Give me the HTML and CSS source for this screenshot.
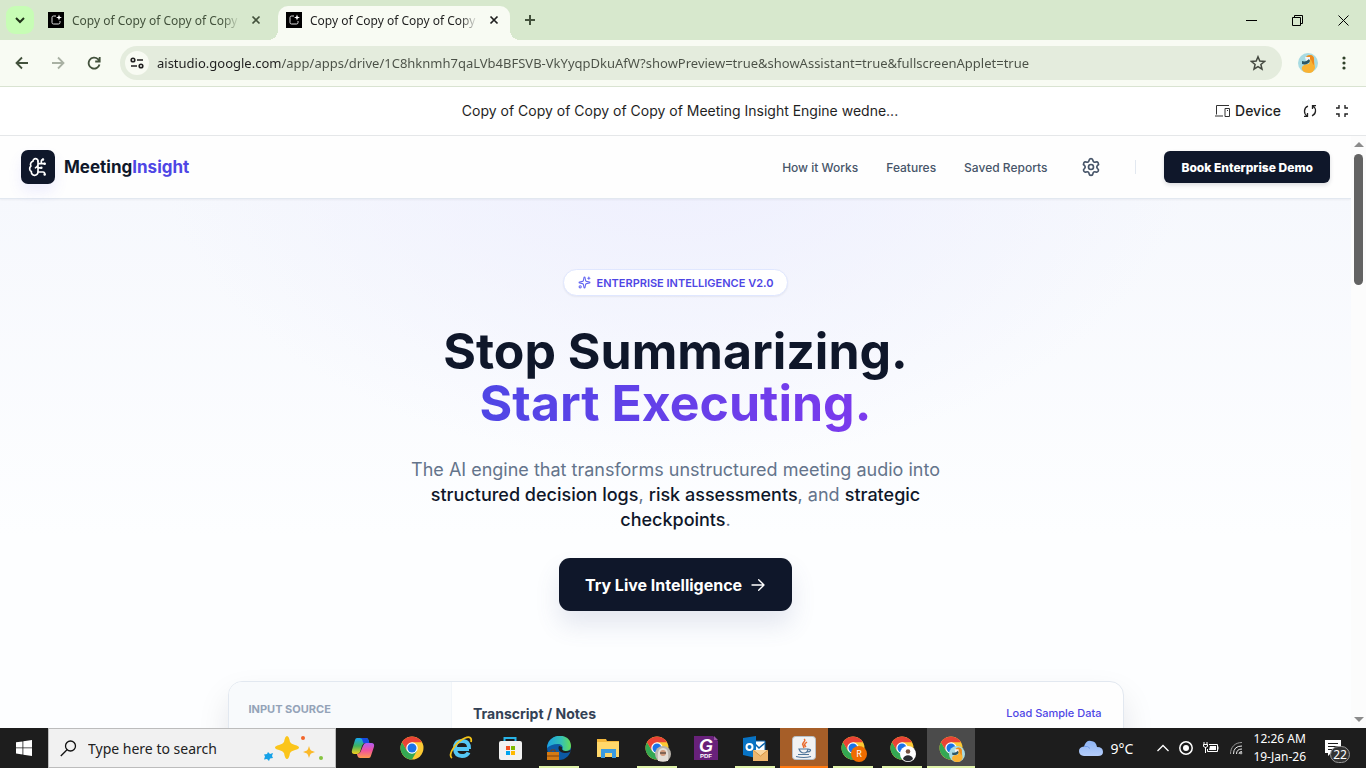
FILE: index.html
```html
<!DOCTYPE html>
<html lang="en">
<head>
  <meta charset="UTF-8">
  <meta name="viewport" content="width=device-width, initial-scale=1.0">
  <title>Meeting Insight Engine</title>
  <link rel="stylesheet" href="styles.css">
</head>
<body>
  <!-- shared symbols -->
  <svg class="defs" aria-hidden="true">
    <symbol id="favicon" viewBox="0 0 16 16">
      <rect width="16" height="16" fill="#000"/>
      <path d="M8 4H5.500A1.500 1.500 0 0 0 4 5.500v5A1.500 1.500 0 0 0 5.500 12h5a1.500 1.500 0 0 0 1.500-1.500V9" fill="none" stroke="#ddd"/>
      <path d="M11 2.500l.8 2.200 2.200.8-2.200.8-.8 2.200-.8-2.200-2.200-.8 2.200-.8z" fill="#fff"/>
    </symbol>
    <symbol id="close" viewBox="0 0 10 10">
      <path d="M1.500 1.500l7 7m0-7l-7 7" fill="none" stroke="currentColor" stroke-width="1.700"/>
    </symbol>
    <symbol id="chrome" viewBox="0 0 48 48">
      <circle cx="24" cy="24" r="23" fill="#fcc934"/>
      <path d="M4.100 12.500A23 23 0 0 0 24 47l10-17.300L24 24l-10 5.700z" fill="#34a853"/>
      <path d="M4.100 12.500A23 23 0 0 1 43.900 12.500H24L14 29.700z" fill="#ea4335"/>
      <circle cx="24" cy="24" r="11.500" fill="#fff"/>
      <circle cx="24" cy="24" r="9" fill="#1a73e8"/>
    </symbol>
    <symbol id="duck" viewBox="0 0 20 20">
      <circle cx="10" cy="10" r="10" fill="#a8dbe2"/>
      <path d="M8 5c1-4 8-4 8 1 0 4 1 6 1 9-1 3-3 5-6 5-5 0-8-3-7-6 1-2 4-3 7-3 1-2 1-4-3-6z" fill="#f9b233"/>
      <path d="M8 4c2-3 8-3 8 2v6c-2-1-2-5-4-6z" fill="#ee8a1d"/>
      <path d="M7 4h5v3l-4 1z" fill="#f4f4f4"/>
      <path d="M4 8c3 1 5 0 7-2l1 2c-1 3-5 4-8 3z" fill="#2d5968"/>
    </symbol>
  </svg>

  <header class="tab-strip">
    <button class="tab-search" aria-label="Search tabs">
      <svg width="12" height="12" viewBox="0 0 12 12" fill="none" stroke="#1f3318" stroke-width="2"><path d="M2 4l4 4 4-4"/></svg>
    </button>
    <div class="tab">
      <svg class="favicon"><use href="#favicon"/></svg>
      <span class="tab-title">Copy of Copy of Copy of Copy of</span>
      <button class="tab-close" aria-label="Close tab"><svg width="10" height="10"><use href="#close"/></svg></button>
    </div>
    <div class="tab tab-active">
      <svg class="favicon"><use href="#favicon"/></svg>
      <span class="tab-title">Copy of Copy of Copy of Copy of</span>
      <button class="tab-close" aria-label="Close tab"><svg width="10" height="10"><use href="#close"/></svg></button>
    </div>
    <button class="new-tab" aria-label="New tab">
      <svg width="12" height="12" viewBox="0 0 12 12" stroke="#43523c" stroke-width="2"><path d="M6 1v10M1 6h10"/></svg>
    </button>
    <div class="window-controls">
      <button aria-label="Minimize"><svg width="11" height="11" viewBox="0 0 11 11" stroke="#000"><path d="M0 5.500h11"/></svg></button>
      <button aria-label="Restore"><svg width="11" height="11" viewBox="0 0 11 11" fill="none" stroke="#000"><path d="M.5 2.500h8v8h-8zM2.500 2.500v-2h8v8h-2"/></svg></button>
      <button aria-label="Close"><svg width="11" height="11" viewBox="0 0 11 11" stroke="#000"><path d="M.5.5l10 10M10.500.5l-10 10"/></svg></button>
    </div>
  </header>

  <div class="toolbar">
    <button class="tool" aria-label="Back"><svg width="14" height="14" viewBox="0 0 14 14" fill="none" stroke="#43523c" stroke-width="1.800"><path d="M13 7H2M7 1.500L1.500 7 7 12.500"/></svg></button>
    <button class="tool" aria-label="Forward"><svg width="14" height="14" viewBox="0 0 14 14" fill="none" stroke="#a9b1a3" stroke-width="1.800"><path d="M1 7h11M7 1.500L12.500 7 7 12.500"/></svg></button>
    <button class="tool" aria-label="Reload"><svg width="14" height="14" viewBox="0 0 14 14" fill="none" stroke="#43523c" stroke-width="1.800"><path d="M12.500 8.500A5.500 5.500 0 1 1 11 3.200L12.500 5M12.700 1v4.500H8.200"/></svg></button>
    <div class="omnibox">
      <button class="site-info" aria-label="View site information"><svg width="14" height="12" viewBox="0 0 14 12" fill="none" stroke="#1f1f1f" stroke-width="1.600"><circle cx="3" cy="3" r="1.800"/><path d="M7 3h6M1 9h6"/><circle cx="11" cy="9" r="1.800"/></svg></button>
      <input class="url" type="text" aria-label="Address" value="aistudio.google.com/app/apps/drive/1C8hknmh7qaLVb4BFSVB-VkYyqpDkuAfW?showPreview=true&amp;showAssistant=true&amp;fullscreenApplet=true">
      <button class="star" aria-label="Bookmark"><svg width="16" height="16" viewBox="0 0 16 16" fill="none" stroke="#43483f" stroke-width="1.500"><path d="M8 1.800l1.800 4.300 4.700.4-3.600 3 1.100 4.600L8 11.600l-4 2.500 1.100-4.600-3.600-3 4.700-.4z"/></svg></button>
    </div>
    <button class="profile" aria-label="Profile"><svg width="20" height="20"><use href="#duck"/></svg></button>
    <button class="more" aria-label="Menu"><svg width="4" height="14" viewBox="0 0 4 14" fill="#2f4028"><circle cx="2" cy="2" r="1.600"/><circle cx="2" cy="7" r="1.600"/><circle cx="2" cy="12" r="1.600"/></svg></button>
  </div>

  <div class="app-bar">
    <span class="app-title">Copy of Copy of Copy of Copy of Meeting Insight Engine wedne...</span>
    <div class="app-actions">
      <button class="device"><svg width="15" height="12" viewBox="0 0 15 12" fill="none" stroke="#333"><path d="M14 .5H1.500v9M0 11h8M10 3.500h4.500v8H10zM12 5.500h1"/></svg>Device</button>
      <button aria-label="Reload app"><svg width="14" height="14" viewBox="0 0 14 14" fill="none" stroke="#222" stroke-width="1.300"><path d="M5 2.200C.5 4 .5 9.500 4 12M1 12.300h3.500V9M9 11.800c4.500-1.800 4.500-7.300 1-9.800M13 1.700H9.500V5"/></svg></button>
      <button aria-label="Exit full screen"><svg width="14" height="14" viewBox="0 0 14 14" fill="none" stroke="#222" stroke-width="1.400"><path d="M1 4h3V1M10 1v3h3M13 10h-3v3M4 13v-3H1"/></svg></button>
    </div>
  </div>

  <div class="frame">
    <div class="preview">
      <nav class="nav">
        <a class="brand" href="#">
          <span class="brand-mark">
            <svg width="20" height="20" viewBox="0 0 24 24" fill="none" stroke="#fff" stroke-width="2" stroke-linecap="round" stroke-linejoin="round">
              <path d="M12 5a3 3 0 1 0-5.997.125 4 4 0 0 0-2.526 5.770 4 4 0 0 0 .556 6.588A4 4 0 1 0 12 18"/>
              <path d="M9 13a4.500 4.500 0 0 0 3-4M12 13h4M12 18h6a2 2 0 0 1 2 2v1M12 8h8M16 8V5a2 2 0 0 1 2-2M12 5v13"/>
              <circle cx="16" cy="13" r=".5"/><circle cx="18" cy="3" r=".5"/><circle cx="20" cy="21" r=".5"/><circle cx="20" cy="8" r=".5"/>
            </svg>
          </span>
          <span>Meeting<span class="brand-accent">Insight</span></span>
        </a>
        <div class="nav-links">
          <a href="#how">How it Works</a>
          <a href="#features">Features</a>
          <a href="#reports">Saved Reports</a>
          <button class="settings" aria-label="Settings">
            <svg width="20" height="20" viewBox="0 0 24 24" fill="none" stroke="#475569" stroke-width="2" stroke-linecap="round" stroke-linejoin="round">
              <path d="M9.671 4.136a2.340 2.340 0 0 1 4.659 0 2.340 2.340 0 0 0 3.319 1.915 2.340 2.340 0 0 1 2.330 4.033 2.340 2.340 0 0 0 0 3.831 2.340 2.340 0 0 1-2.330 4.033 2.340 2.340 0 0 0-3.319 1.915 2.340 2.340 0 0 1-4.659 0 2.340 2.340 0 0 0-3.320-1.915 2.340 2.340 0 0 1-2.330-4.033 2.340 2.340 0 0 0 0-3.831A2.340 2.340 0 0 1 6.350 6.051a2.340 2.340 0 0 0 3.319-1.915"/>
              <circle cx="12" cy="12" r="3"/>
            </svg>
          </button>
          <span class="divider"></span>
          <button class="demo">Book Enterprise Demo</button>
        </div>
      </nav>

      <main class="hero">
        <div class="badge">
          <svg width="13" height="13" viewBox="0 0 24 24" fill="none" stroke="#6366f1" stroke-width="2" stroke-linecap="round" stroke-linejoin="round">
            <path d="M11.017 2.814a1 1 0 0 1 1.966 0l1.051 5.558a2 2 0 0 0 1.594 1.594l5.558 1.051a1 1 0 0 1 0 1.966l-5.558 1.051a2 2 0 0 0-1.594 1.594l-1.051 5.558a1 1 0 0 1-1.966 0l-1.051-5.558a2 2 0 0 0-1.594-1.594l-5.558-1.051a1 1 0 0 1 0-1.966l5.558-1.051a2 2 0 0 0 1.594-1.594zM20 2v4M22 4h-4"/>
            <circle cx="4" cy="20" r="2"/>
          </svg>
          ENTERPRISE INTELLIGENCE V2.0
        </div>
        <h1>Stop Summarizing.<br><span class="gradient-text">Start Executing.</span></h1>
        <p class="lead">The AI engine that transforms unstructured meeting audio into <strong>structured decision logs</strong>, <strong>risk assessments</strong>, and <strong>strategic checkpoints</strong>.</p>
        <button class="cta">Try Live Intelligence
          <svg width="16" height="16" viewBox="0 0 24 24" fill="none" stroke="#fff" stroke-width="2" stroke-linecap="round" stroke-linejoin="round"><path d="M3 12h18M13 4l8 8-8 8"/></svg>
        </button>

        <section class="workspace">
          <aside class="sources"><h2>INPUT SOURCE</h2></aside>
          <div class="editor">
            <h3>Transcript / Notes</h3>
            <button class="sample">Load Sample Data</button>
          </div>
        </section>
      </main>
    </div>
    <div class="scrollbar">
      <span class="arrow-up"></span>
      <span class="thumb"></span>
      <span class="arrow-down"></span>
    </div>
  </div>

  <footer class="taskbar">
    <button class="start" aria-label="Start">
      <svg width="16" height="16" viewBox="0 0 16 16" fill="#fff"><path d="M0 2.300L6.500 1.400v6.100H0zM7.300 1.300L16 0v7.500H7.300zM0 8.300h6.500v6.200L0 13.600zM7.300 8.300H16V16l-8.700-1.300z"/></svg>
    </button>
    <label class="search">
      <svg width="17" height="17" viewBox="0 0 17 17" fill="none" stroke="#111" stroke-width="1.300"><circle cx="10.500" cy="6" r="5"/><path d="M7 9.700L.8 16"/></svg>
      <input type="text" placeholder="Type here to search" aria-label="Search">
      <svg width="64" height="28" viewBox="0 0 64 28">
        <path d="M24 2q2 0 3 6 1 2 5 3 4 1 4 2.500t-4 2.500q-4 1-5 3-1 6-3 6t-3-6q-1-2-5-3-4-1-4-2.500t4-2.500q4-1 5-3 1-6 3-6z" fill="#fbc51b"/>
        <path d="M46 12q1 4 2 4.500l4 1.500-4 1.500q-1 .5-2 4.500-1-4-2-4.500L40 18l4-1.500q1-.5 2-4.500z" fill="#fbb929"/>
        <path d="M5 18l2 2 3-1-1 3 1 2-3 .5-1 2.500-2-2-3 .5 1-3-1-2 3-.5z" fill="#15a1e8"/>
        <circle cx="40" cy="4" r="2" fill="#f2652a"/><circle cx="58" cy="24" r="2" fill="#86c440"/>
      </svg>
    </label>

    <div class="apps">
      <button class="app" aria-label="Copilot">
        <svg width="24" height="24" viewBox="0 0 24 24">
          <defs>
            <linearGradient id="cp1" x2="0" y2="1"><stop offset="0" stop-color="#15a8f4"/><stop offset=".5" stop-color="#3fb35e"/><stop offset="1" stop-color="#f5cf1c"/></linearGradient>
            <linearGradient id="cp2" x2="0" y2="1"><stop offset="0" stop-color="#b05cf5"/><stop offset=".5" stop-color="#f1539c"/><stop offset="1" stop-color="#ff9a4d"/></linearGradient>
          </defs>
          <path d="M6 2h9q2 0 2.500 2l.8 3H14q-2 0-3 3l-2 6q-.6 2-3 2H3.500Q0 18 1 14L4 4q.5-2 2-2z" fill="url(#cp1)"/>
          <path d="M9 2h6q2 0 2.500 2l.8 3h-6L11 3z" fill="#174ae4"/>
          <path d="M18 22H9q-2 0-2.500-2l-.6-2q3 0 4-3l2-5q1-3 3-3h5.500q3.500 0 2.500 4l-3 9q-.5 2-1.900 2z" fill="url(#cp2)"/>
        </svg>
      </button>
      <button class="app" aria-label="Chrome"><svg width="24" height="24"><use href="#chrome"/></svg></button>
      <button class="app" aria-label="Internet Explorer">
        <svg width="24" height="24" viewBox="0 0 24 24" fill="none">
          <path d="M20 13H7M20 13q.5-8-7-8T6 13q.5 7 7 7 5 0 6.500-3.500" stroke="#54c8f5" stroke-width="4"/>
          <path d="M3 22c-5-3 4-16 13-20 5-2 7 0 6 4" stroke="#f5c518" stroke-width="1.800"/>
        </svg>
      </button>
      <button class="app" aria-label="Microsoft Store">
        <svg width="24" height="24" viewBox="0 0 24 24"><path d="M6.500 7V2h11v5" fill="none" stroke="#28b4e8" stroke-width="2"/><rect x="1" y="5" width="23" height="19" rx="2" fill="#f2f2f2"/><path d="M8 10h4v4H8z" fill="#f25022"/><path d="M13 10h4v4h-4z" fill="#7fba00"/><path d="M8 15h4v4H8z" fill="#00a4ef"/><path d="M13 15h4v4h-4z" fill="#ffb900"/></svg>
      </button>
      <button class="app app-open" aria-label="Edge">
        <svg width="24" height="24" viewBox="0 0 24 24">
          <defs><linearGradient id="edge"><stop offset="0" stop-color="#1ba1e2"/><stop offset=".6" stop-color="#35c1b4"/><stop offset="1" stop-color="#66dd55"/></linearGradient></defs>
          <circle cx="12" cy="12" r="12" fill="#0c59a4"/>
          <path d="M0 12C1-4 24-4 24 10c0 6-8 7-9 4 2-3 0-6-4-6C6 8 2 10 0 12z" fill="url(#edge)"/>
          <path d="M12 10c-2 4 2 9 11 6l1-2c-5 2-10 1-9-3z" fill="#1d1e20"/>
          <path d="M0 16h12v8H0z" fill="#d57a12"/><path d="M0 20h12M4 16v-2h4v2" fill="none" stroke="#81400c"/>
        </svg>
      </button>
      <button class="app" aria-label="File Explorer">
        <svg width="24" height="24" viewBox="0 0 24 24"><path d="M1 3h9l1 2h12v16H1z" fill="#f3b73b"/><path d="M1 6h22v15H1z" fill="#ffd76a"/><path d="M5 13h15v9h-4v-5H9v5H5z" fill="#3a9be0"/></svg>
      </button>
      <button class="app app-open" aria-label="Chrome, second profile">
        <svg width="24" height="24"><use href="#chrome"/></svg>
        <svg class="profile-dot" viewBox="0 0 16 16"><circle cx="8" cy="8" r="8" fill="#b9b4ac"/><path d="M3 15C2 5 4 2 8 2s6 3 5 13z" fill="#e4ded7"/><circle cx="8" cy="7" r="3" fill="#d1997a"/><path d="M5 7h6" stroke="#333"/></svg>
      </button>
      <button class="app" aria-label="PDF Editor">
        <svg width="24" height="24" viewBox="0 0 24 24"><path d="M0 0h19l5 5v19H0z" fill="#68217a"/><path d="M20 0l4 4h-4z" fill="#9a55a8"/><text class="pdf-g" x="5" y="16">G</text><text class="pdf-label" x="6" y="22">PDF</text></svg>
      </button>
      <button class="app app-open" aria-label="Outlook">
        <svg width="26" height="26" viewBox="0 0 26 26"><path d="M12 6h11v12H12z" fill="#fff" stroke="#0a64ad"/><path d="M13 9l4 4 6-5" fill="none" stroke="#0a64ad" stroke-width="1.500"/><path d="M1 3l13-2v22L1 20z" fill="#0873c4"/><circle cx="7.500" cy="12" r="3" fill="none" stroke="#fff" stroke-width="2"/><path d="M11 15h15v11H11z" fill="#efb66d"/><path d="M11 15l7.500 6 7.500-6" fill="#fbd69f" stroke="#d59543"/></svg>
      </button>
      <button class="app app-alert" aria-label="Java">
        <svg width="24" height="24" viewBox="0 0 24 24"><rect x=".5" y=".5" width="23" height="23" rx="3" fill="#f1f2f3" stroke="#b7c0c8"/><path d="M12 3c3 2-3 4-1 6l1 3M15 6c-3 2-3 3-1 5" fill="none" stroke="#ea6b2d" stroke-width="1.500"/><path d="M7 13h9q-.5 4-4 4t-5-4zM16 13c4 0 3 3-1 3M6 18.500h11M4 20.500q8 2 15 0" fill="none" stroke="#50769a" stroke-width="1.200"/></svg>
      </button>
      <button class="app app-open" aria-label="Chrome, profile R">
        <svg width="24" height="24"><use href="#chrome"/></svg>
        <span class="profile-dot profile-letter">R</span>
      </button>
      <button class="app app-open" aria-label="Chrome, third profile">
        <svg width="24" height="24"><use href="#chrome"/></svg>
        <svg class="profile-dot" viewBox="0 0 16 16"><circle cx="8" cy="8" r="8" fill="#fff"/><circle cx="8" cy="5.500" r="2.300" fill="#765341"/><path d="M3 13c1-5 9-5 10 0-3 3-7 3-10 0z" fill="#292b30"/></svg>
      </button>
      <button class="app app-open app-current" aria-label="Chrome, current">
        <svg width="24" height="24"><use href="#chrome"/></svg>
        <svg class="profile-dot"><use href="#duck"/></svg>
      </button>
    </div>

    <div class="tray">
      <button class="weather">
        <svg width="24" height="17" viewBox="0 0 24 17"><defs><linearGradient id="cloud" x2="0" y2="1"><stop offset="0" stop-color="#8fb5f5"/><stop offset="1" stop-color="#b4cdfa"/></linearGradient></defs><path d="M5 16q-5-.5-5-5 0-4 5-4.500Q7 0 12 1q5 0 6 6 6 0 6 5 0 4-5 4z" fill="url(#cloud)"/><path d="M5 6.500q4-1 6 2" fill="none" stroke="#6f9bea"/></svg>
        9°C
      </button>
      <button aria-label="Show hidden icons"><svg width="12" height="8" viewBox="0 0 12 8" fill="none" stroke="#fff" stroke-width="1.300"><path d="M.5 7L6 1.500 11.500 7"/></svg></button>
      <button aria-label="Recorder"><svg width="14" height="14" viewBox="0 0 14 14"><circle cx="7" cy="7" r="6.200" fill="none" stroke="#fff" stroke-width="1.500"/><circle cx="7" cy="7" r="3" fill="#fff"/></svg></button>
      <button aria-label="Battery"><svg width="16" height="12" viewBox="0 0 16 12" fill="none" stroke="#fff"><path d="M6 2.500h8.500v7h-10V7M15 4.500v3M1 0v3M4 0v3M.5 2.500h4v2q-2 2-4 0zM2.500 5v6"/><path d="M7 4h6v4H6z" fill="#fff" stroke="none"/></svg></button>
      <button aria-label="Network"><svg width="14" height="14" viewBox="0 0 14 14" fill="none" stroke="#999"><path d="M1.500 13C1.500 6 6 1.500 13 1.500"/><path d="M4.500 13q0-8 8.500-8M7.500 13q0-5 5.500-5M10 13q0-2.500 3-2.500" stroke="#eee"/><circle cx="12" cy="12" r="1" fill="#fff"/></svg></button>
      <button class="clock"><time>12:26 AM</time><time>19-Jan-26</time></button>
      <button class="notices" aria-label="Notifications">
        <svg width="17" height="17" viewBox="0 0 17 17"><path d="M0 0h16v13H6l-3 3v-3H0z" fill="#fff"/><path d="M3 3.500h10M3 6.500h10M3 9.500h6" stroke="#1c1c1c"/></svg>
        <span class="count">22</span>
      </button>
    </div>
  </footer>
</body>
</html>
```
FILE: styles.css
```css
* {
  box-sizing: border-box;
}

body {
  margin: 0;
  height: 100vh;
  display: flex;
  flex-direction: column;
  overflow: hidden;
  background: #fff;
  font-family: "Segoe UI", "Noto Sans", sans-serif;
  font-size: 12px;
  color: #1f1f1f;
}

button {
  display: flex;
  align-items: center;
  justify-content: center;
  padding: 0;
  border: none;
  background: none;
  font: inherit;
  color: inherit;
  cursor: pointer;
}

input {
  border: none;
  outline: none;
  padding: 0;
  background: none;
  font: inherit;
}

a {
  color: inherit;
  text-decoration: none;
}

svg {
  flex: none;
}

.defs {
  position: absolute;
  width: 0;
  height: 0;
}

/* Browser tabs */
.tab-strip {
  display: flex;
  flex: none;
  height: 40px;
  padding: 6px 0 0 6px;
  background: #d7e8cd;
}

.tab-search {
  width: 28px;
  height: 28px;
  margin-right: 6px;
  border-radius: 9px;
  background: #c7fdb5;
}

.tab {
  position: relative;
  display: flex;
  align-items: center;
  width: 232px;
  height: 34px;
  padding: 0 8px 6px;
  margin-right: 6px;
  color: #43523c;
}

.tab-active {
  background: #f8fbf3;
  border-radius: 10px 10px 0 0;
  color: #1f1f1f;
}

.tab-active::before,
.tab-active::after {
  content: "";
  position: absolute;
  bottom: 0;
  width: 10px;
  height: 10px;
}

.tab-active::before {
  right: 100%;
  background: radial-gradient(circle at 0 0, #d7e8cd 10px, #f8fbf3 10px);
}

.tab-active::after {
  left: 100%;
  background: radial-gradient(circle at 100% 0, #d7e8cd 10px, #f8fbf3 10px);
}

.favicon {
  width: 16px;
  height: 16px;
  margin-right: 8px;
}

.tab-title {
  flex: 1;
  overflow: hidden;
  white-space: nowrap;
  -webkit-mask-image: linear-gradient(90deg, #000 150px, transparent 168px);
  mask-image: linear-gradient(90deg, #000 150px, transparent 168px);
}

.tab-close {
  width: 16px;
  height: 16px;
  margin-left: 8px;
}

.new-tab {
  width: 28px;
  height: 28px;
}

.window-controls {
  display: flex;
  margin-left: auto;
  height: 28px;
}

.window-controls button {
  width: 46px;
}

/* Address bar */
.toolbar {
  display: flex;
  flex: none;
  align-items: center;
  height: 47px;
  padding: 0 10px 0 4px;
  background: #f8fbf3;
  border-bottom: 1px solid #d9e3d1;
}

.tool {
  width: 36px;
  height: 34px;
}

.omnibox {
  display: flex;
  flex: 1;
  align-items: center;
  height: 34px;
  margin: 0 16px 0 8px;
  padding: 0 16px 0 5px;
  border-radius: 17px;
  background: #e4ecdd;
}

.site-info {
  width: 24px;
  height: 24px;
  margin-right: 8px;
  border-radius: 50%;
  background: #f8fbf3;
}

.url {
  flex: 1;
  font-size: 13px;
  color: transparent;
  /* host is darker than the path */
  background: linear-gradient(90deg, #1f1f1f 125px, #4a5046 125px);
  -webkit-background-clip: text;
  background-clip: text;
}

.profile {
  margin-right: 14px;
}

.more {
  width: 24px;
}

/* Applet bar */
.app-bar {
  display: grid;
  grid-template-columns: 1fr auto 1fr;
  align-items: center;
  flex: none;
  height: 49px;
  padding: 0 17px 1px 11px;
  border-bottom: 1px solid #e5e7e9;
  font-family: Inter, sans-serif;
  font-size: 14px;
}

.app-title {
  grid-column: 2;
}

.app-actions {
  display: flex;
  justify-content: flex-end;
  gap: 18px;
}

.device {
  gap: 5px;
  margin-right: 4px;
  font-weight: 500;
}

.frame {
  display: flex;
  flex: 1;
  min-height: 0;
}

.scrollbar {
  display: flex;
  flex-direction: column;
  align-items: center;
  width: 15px;
  padding: 6px 0;
  background: #fcfcfc;
}

.arrow-up,
.arrow-down {
  border: 5px solid transparent;
}

.arrow-up {
  border-top: none;
  border-bottom-color: #8b8b8b;
}

.arrow-down {
  border-bottom: none;
  border-top-color: #8b8b8b;
  margin-top: auto;
}

.thumb {
  width: 9px;
  height: 131px;
  margin-top: 7px;
  border-radius: 5px;
  background: #636363;
}

/* Landing page */
.preview {
  flex: 1;
  overflow: hidden;
  font-family: Inter, sans-serif;
  color: #0f172a;
  background:
    radial-gradient(ellipse 520px 330px at 50% 0, #eeeffe, transparent),
    linear-gradient(#f6f8fd 60px, #fdfeff 400px);
}

.nav {
  position: relative;
  display: flex;
  align-items: center;
  justify-content: space-between;
  height: 63px;
  padding: 0 21px;
  background: #fefefe;
  border-bottom: 1px solid #e2e8f0;
  box-shadow: 0 1px 2px rgba(15, 23, 42, 0.05);
}

.brand {
  display: flex;
  align-items: center;
  gap: 9px;
  font-size: 17px;
  font-weight: 700;
}

.brand-mark {
  display: flex;
  align-items: center;
  justify-content: center;
  width: 34px;
  height: 34px;
  border-radius: 7px;
  background: #0f172a;
  box-shadow: 0 8px 14px rgba(99, 102, 241, 0.1);
}

.brand-accent {
  color: #4f46e5;
}

.nav-links {
  display: flex;
  align-items: center;
  gap: 28px;
  font-size: 12px;
  font-weight: 500;
  color: #475569;
}

.settings {
  width: 32px;
  height: 32px;
}

.divider {
  width: 1px;
  height: 14px;
  background: #e2e8f0;
}

.demo {
  height: 32px;
  padding: 0 17px;
  border-radius: 6px;
  background: #0f172a;
  color: #fff;
  font-weight: 800;
  box-shadow: 0 2px 4px rgba(15, 23, 42, 0.15);
}

.hero {
  display: flex;
  flex-direction: column;
  align-items: center;
  padding: 70px 21px 0;
  text-align: center;
}

.badge {
  display: flex;
  align-items: center;
  gap: 6px;
  height: 27px;
  padding: 0 14px;
  border: 1px solid #e0e7ff;
  border-radius: 14px;
  background: #fff;
  box-shadow: 0 1px 2px rgba(15, 23, 42, 0.06);
  color: #4f46e5;
  font-size: 11px;
  font-weight: 600;
}

h1 {
  margin: 29px 0 28px;
  font-size: 50px;
  line-height: 52px;
  font-weight: 700;
}

.gradient-text {
  background: linear-gradient(90deg, #4f46e5, #7c3aed);
  -webkit-background-clip: text;
  background-clip: text;
  color: transparent;
}

.lead {
  max-width: 540px;
  margin: 0 0 26px;
  font-size: 18px;
  line-height: 25px;
  color: #64748b;
}

.lead strong {
  font-weight: 500;
  color: #0f172a;
}

.cta {
  gap: 8px;
  height: 53px;
  padding: 0 26px;
  border-radius: 11px;
  background: #0f172a;
  color: #fff;
  font-size: 16px;
  font-weight: 700;
  box-shadow: 0 14px 24px rgba(79, 90, 150, 0.14);
}

.workspace {
  display: flex;
  width: 100%;
  max-width: 896px;
  min-height: 480px;
  margin-top: 70px;
  border: 1px solid #e2e8f0;
  border-radius: 14px;
  overflow: hidden;
  background: #fefefe;
  box-shadow: 0 16px 32px rgba(15, 23, 42, 0.1);
  text-align: left;
}

.sources {
  width: 25%;
  padding: 21px 20px;
  background: #f8fafc;
  border-right: 1px solid #f1f5f9;
}

.sources h2 {
  margin: 0;
  font-size: 11px;
  line-height: 13px;
  font-weight: 700;
  color: #94a3b8;
}

.editor {
  display: flex;
  align-items: flex-start;
  justify-content: space-between;
  flex: 1;
  padding: 21px;
}

.editor h3 {
  margin: 0;
  font-size: 14px;
  line-height: 22px;
  font-weight: 700;
  color: #334155;
}

.sample {
  height: 20px;
  color: #4f46e5;
  font-size: 11px;
  font-weight: 500;
}

/* Windows taskbar */
.taskbar {
  display: flex;
  flex: none;
  height: 40px;
  background: #1d1d1d;
  color: #fff;
}

.start {
  width: 48px;
}

.search {
  display: flex;
  align-items: center;
  width: 288px;
  margin-right: 3px;
  padding: 0 8px 0 11px;
  border: 1px solid #bcbcbc;
  background: #f1f1f1;
}

.search input {
  flex: 1;
  min-width: 0;
  margin-left: 11px;
  font-size: 14px;
}

.search input::placeholder {
  color: #222;
}

.apps {
  display: flex;
  gap: 1px;
}

.app {
  position: relative;
  width: 48px;
}

.app-open::after,
.app-alert::after {
  content: "";
  position: absolute;
  left: 4px;
  right: 4px;
  bottom: 0;
  height: 2px;
  background: #dff2a9;
}

.app-alert {
  background: #a65e28;
}

.app-alert::after {
  left: 0;
  right: 0;
  background: #ff7a12;
}

.app-current {
  background: #4b4b4b;
}

.app-current::after {
  left: 0;
  right: 0;
}

.profile-dot {
  position: absolute;
  left: 22px;
  top: 18px;
  width: 16px;
  height: 16px;
}

.profile-letter {
  border-radius: 50%;
  background: #ef6c00;
  color: #fff;
  font-size: 9px;
  line-height: 16px;
}

.pdf-g,
.pdf-label {
  fill: #fff;
  font-family: "Liberation Sans", sans-serif;
  font-weight: bold;
}

.pdf-g {
  font-size: 18px;
  font-style: italic;
}

.pdf-label {
  font-size: 6px;
}

.tray {
  display: flex;
  align-items: center;
  gap: 10px;
  margin-left: auto;
  padding-right: 16px;
}

.weather {
  gap: 8px;
  margin-right: 14px;
  font-size: 14px;
}

.clock {
  flex-direction: column;
  line-height: 18px;
}

.notices {
  position: relative;
  justify-content: flex-start;
  width: 25px;
  height: 28px;
  margin-left: 9px;
}

.count {
  position: absolute;
  left: 5px;
  top: 12px;
  width: 20px;
  border: 1px solid #999;
  border-radius: 9px;
  background: #333;
  line-height: 15px;
}
```
